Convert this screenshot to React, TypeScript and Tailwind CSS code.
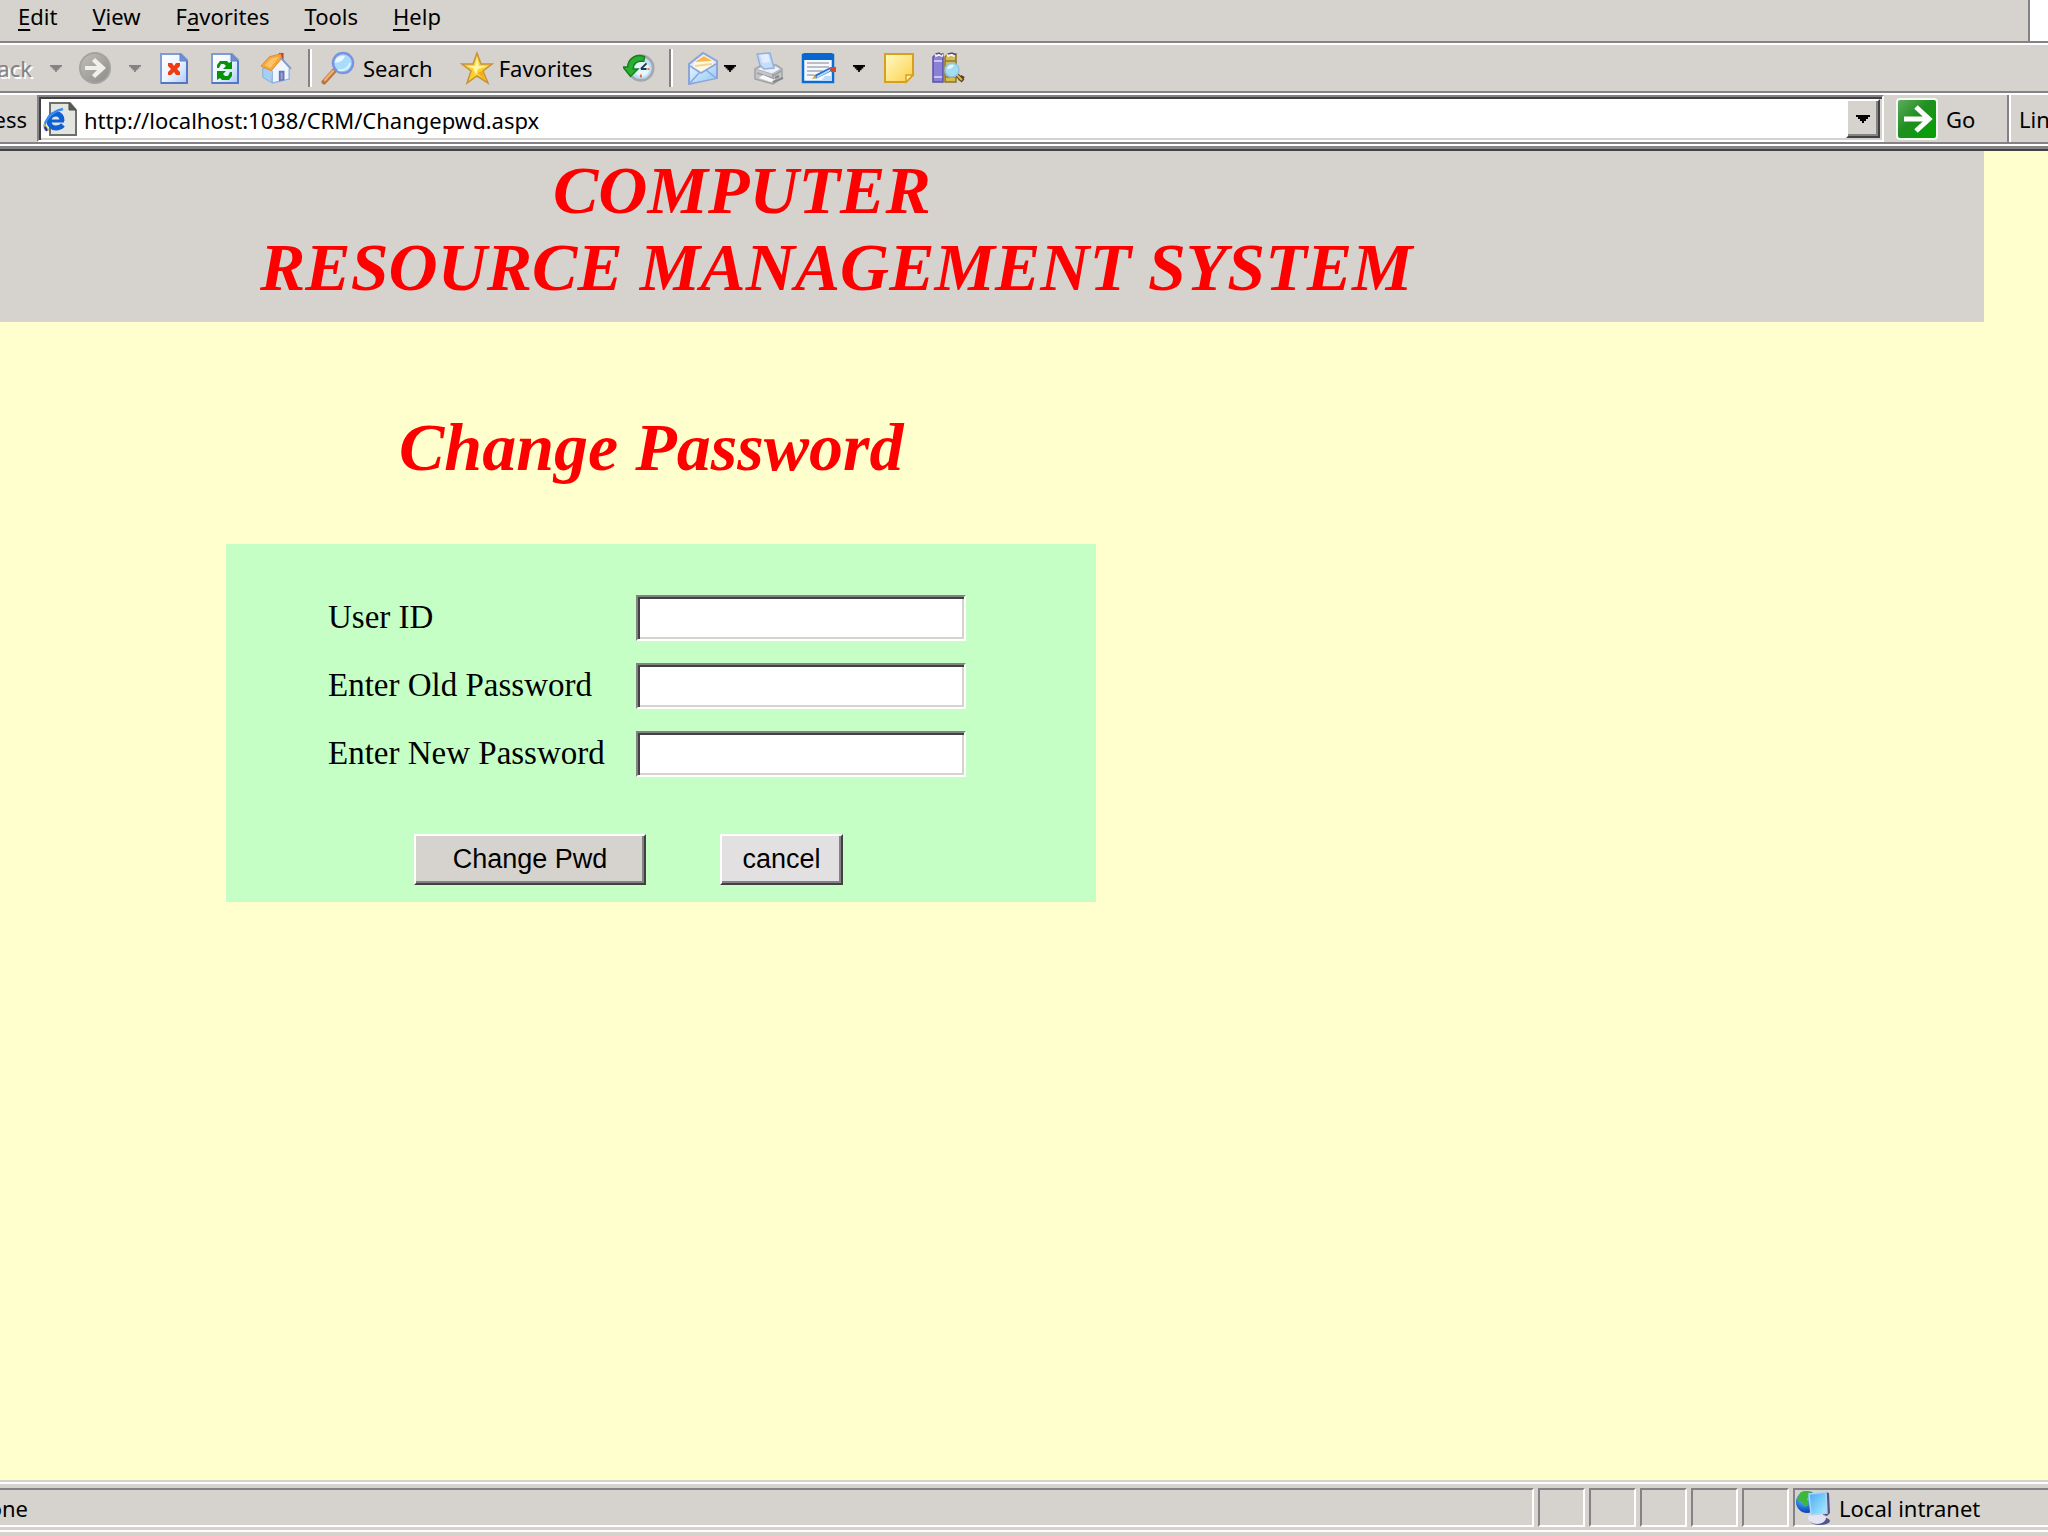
import type { ReactNode } from "react";

const raised =
  "border-2 border-t-white border-l-white border-r-[#424142] border-b-[#424142] shadow-[inset_-2px_-2px_0_#848284]";
const sunken =
  "border-2 border-t-[#848284] border-l-[#848284] border-r-white border-b-white shadow-[inset_2px_2px_0_#424142,inset_-2px_-2px_0_#d6d3ce]";

function Caret({ className }: { className: string }) {
  return (
    <svg viewBox="0 0 14 8" className={className} fill="currentColor" aria-hidden="true">
      <path d="M0 0h14v2h-2v2h-2v2H8v2H6V6H4V4H2V2H0z" />
    </svg>
  );
}

function Tool({ label, children }: { label: string; children: ReactNode }) {
  return (
    <button type="button" aria-label={label} className="flex size-8 shrink-0 items-center justify-center">
      {children}
    </button>
  );
}

function Divider() {
  return <div className="h-[38px] w-1 shrink-0 border-l-2 border-r-2 border-l-[#848284] border-r-white" />;
}

function ForwardIcon() {
  return (
    <svg viewBox="0 0 32 32" className="size-8">
      <defs>
        <linearGradient id="fwd" x1="0" y1="0" x2="1" y2="1">
          <stop offset="0" stopColor="#c0bfba" />
          <stop offset="1" stopColor="#8c8b87" />
        </linearGradient>
      </defs>
      <circle cx="16" cy="16" r="15" fill="url(#fwd)" stroke="#a3a29e" strokeWidth="2" />
      <path d="M6 14h12l-5-5 3-3 11 10-11 10-3-3 5-5H6z" fill="#f0efeb" />
    </svg>
  );
}

function PageSheet({ children }: { children: ReactNode }) {
  return (
    <svg viewBox="0 0 32 32" className="size-8">
      <defs>
        <linearGradient id="sheet" x1="0" y1="0" x2="1" y2="1">
          <stop offset="0" stopColor="#ffffff" />
          <stop offset=".5" stopColor="#eef5ff" />
          <stop offset="1" stopColor="#a9cbf7" />
        </linearGradient>
      </defs>
      <path d="M3 2h20l6 6v23H3z" fill="url(#sheet)" stroke="#7f9bd6" strokeWidth="2" />
      <path d="M3 31h26V9" fill="none" stroke="#5477c4" strokeWidth="2" />
      <path d="M22 2v7h7z" fill="#7391d2" stroke="#5f7fc8" strokeWidth="1" />
      {children}
    </svg>
  );
}

function StopIcon() {
  return (
    <PageSheet>
      <path d="M10 11h4l2 3 2-3h4v3l-3 3 3 3v3h-4l-2-3-3 3h-3v-3l3-3-3-3z" fill="#f03c14" />
    </PageSheet>
  );
}

function RefreshIcon() {
  return (
    <PageSheet>
      <path d="M8 16v-3l3-4h7l2 2 3-2v8h-9l3-3-2-2h-3l-2 4z" fill="#069406" />
      <path d="M8 19h9l-3 3 2 2h3l2-4h2v4l-3 4h-7l-2-2-3 2z" fill="#069406" />
    </PageSheet>
  );
}

function HomeIcon() {
  return (
    <svg viewBox="0 0 34 34" className="h-[34px] w-[34px]">
      <path d="M20 1h5v10h-5z" fill="#c34020" />
      <path d="M3 17v10l10 6V18z" fill="#a5cff4" stroke="#83acdd" strokeWidth="1" />
      <path d="M12 20L22 7l9 11v12l-18 3z" fill="#eff6fd" />
      <path d="M13 33V20M13 33l18-4V18" fill="none" stroke="#8fb4e2" strokeWidth="1.5" />
      <path d="M1 15L10 5l12-3 1 5-11 13z" fill="#f8a63c" stroke="#e08a2c" strokeWidth="1" />
      <path d="M5 14l7-7 8-2-9 12z" fill="#ffc46a" />
      <path d="M22 6l11 12" stroke="#7f9ace" strokeWidth="2" />
      <path d="M20 20h6v10l-6 1z" fill="#6c74b8" />
      <path d="M22 22h2v7h-2z" fill="#9ea4d8" />
    </svg>
  );
}

function SearchIcon() {
  return (
    <svg viewBox="0 0 34 34" className="h-[34px] w-[34px]">
      <path d="M3 31l10-11" stroke="#b9754a" strokeWidth="5" strokeLinecap="round" />
      <path d="M4 29l8-9" stroke="#f2b068" strokeWidth="2.5" strokeLinecap="round" />
      <circle cx="22" cy="12" r="10" fill="#a9dbfb" stroke="#7d92e0" strokeWidth="2.5" />
      <path d="M14 12c0-6 6-8 10-7-2 5-5 6-10 7z" fill="#ecf8ff" />
      <path d="M17 19c6 1 11-2 12-7" fill="none" stroke="#d6f4ff" strokeWidth="2" />
    </svg>
  );
}

function StarIcon() {
  return (
    <svg viewBox="0 0 34 34" className="h-[34px] w-[34px]">
      <path d="M17 2l4 11h11l-9 7 5 12-11-7-10 7 4-12-9-7h11z" fill="#fbd12c" stroke="#c9913a" strokeWidth="1.5" />
      <path d="M17 6l2 9h8l-9 3-2 6-3-7-7-2h9z" fill="#fff6a8" />
      <path d="M18 22l7 7-3-9z" fill="#f4aa10" />
    </svg>
  );
}

function HistoryIcon() {
  return (
    <svg viewBox="0 0 34 34" className="h-[34px] w-[34px]">
      <circle cx="19" cy="17" r="13" fill="#bfe0f4" stroke="#a4a8b0" strokeWidth="3" />
      <circle cx="20" cy="18" r="8" fill="#e4f6fd" />
      <path d="M19 18l6-6M19 18h6" stroke="#26364e" strokeWidth="2" />
      <path d="M19 24v3M26 18h2" stroke="#e0703c" strokeWidth="2" />
      <path d="M23 5C13 1 5 8 5 16H0l8 10 8-8h-5c0-6 4-9 11-8z" fill="#2cae30" stroke="#147d1c" strokeWidth="1.5" />
    </svg>
  );
}

function MailIcon() {
  return (
    <svg viewBox="0 0 32 34" className="h-[34px] w-8">
      <defs>
        <linearGradient id="mail" x1="0" y1="0" x2="1" y2="1">
          <stop offset="0" stopColor="#eaf7ff" />
          <stop offset="1" stopColor="#8fc8f4" />
        </linearGradient>
      </defs>
      <path d="M2 13L16 2l14 8v17L2 33z" fill="#d7e8fa" stroke="#8ea2dc" strokeWidth="2" />
      <path d="M7 11l10-7 9 6v7l-12 4-8-4z" fill="#fff7e2" />
      <path d="M8 11l9-6 8 5z" fill="#f7b84c" />
      <path d="M8 15l17-2" stroke="#f3d79a" strokeWidth="2" />
      <path d="M3 15l11 7 15-9v14L3 32z" fill="url(#mail)" />
      <path d="M3 15l11 7 15-9M3 32l9-10M29 27l-10-8" fill="none" stroke="#86a6e2" strokeWidth="1.5" />
    </svg>
  );
}

function PrinterIcon() {
  return (
    <svg viewBox="0 0 32 34" className="h-[34px] w-8">
      <path d="M2 18l7-4h14l6 4v9l-9 6-18-5z" fill="#c4c5c7" stroke="#a0a2a6" strokeWidth="1.5" />
      <path d="M3 18l7-3h13l5 3-9 5z" fill="#f0f1f2" stroke="#b0b3b8" strokeWidth="1" />
      <path d="M4 3l13-1 4 15-10 1-4-4z" fill="#c5dcfa" stroke="#8fb0e4" strokeWidth="1.5" />
      <path d="M7 4l8-1 2 8-7 1z" fill="#e2eefe" />
      <path d="M4 22l15 5M20 23v8M20 25l8-5" stroke="#9a9da2" strokeWidth="1.5" />
      <path d="M6 27l12 4 4-2-12-5z" fill="#fafafa" />
      <path d="M22 27l4-2M20 31l10-4" stroke="#85878a" strokeWidth="2" />
    </svg>
  );
}

function EditIcon() {
  return (
    <svg viewBox="0 0 36 32" className="h-8 w-9 shrink-0">
      <path d="M2 3h30v27H2z" fill="#f4f8ff" stroke="#0c6cd2" strokeWidth="2.5" />
      <path d="M1 3l2-2h28l2 2v5H1z" fill="#0868cf" />
      <path d="M6 11h22M6 15h22M6 19h16M6 23h7" stroke="#a7abb4" strokeWidth="1.5" />
      <path d="M24 24h7v5H20z" fill="#bcdcfb" />
      <path d="M14 25l16-8" stroke="#2c6fd0" strokeWidth="4" />
      <path d="M16 25l13-7" stroke="#b8e2ff" strokeWidth="1.5" />
      <path d="M11 27l3-4 2 3z" fill="#c9a23c" />
      <path d="M29 15h6v5h-5z" fill="#dc4426" />
    </svg>
  );
}

function NoteIcon() {
  return (
    <svg viewBox="0 0 32 32" className="size-8">
      <defs>
        <linearGradient id="note" x1="0" y1="0" x2="1" y2="1">
          <stop offset="0" stopColor="#fffbc4" />
          <stop offset="1" stopColor="#fcd04c" />
        </linearGradient>
      </defs>
      <path d="M2 2h28v21l-7 7H2z" fill="url(#note)" stroke="#d8a01e" strokeWidth="2" />
      <path d="M30 23h-7v7z" fill="#fff3b0" stroke="#d8a01e" strokeWidth="1.5" />
    </svg>
  );
}

function ResearchIcon() {
  return (
    <svg viewBox="0 0 34 32" className="h-8 w-[34px] shrink-0">
      <path d="M1 5l3-3h7v28H1z" fill="#8a80d8" stroke="#5a52a8" strokeWidth="1.5" />
      <path d="M2 9h8M2 25h8" stroke="#c9c4f4" strokeWidth="2" />
      <path d="M13 5l3-3h8v28H13z" fill="#d8bd4a" stroke="#8c7428" strokeWidth="1.5" />
      <path d="M13 9h11M13 25h11" stroke="#8c7a3c" strokeWidth="1.5" />
      <path d="M3 4l4-2 4 2M15 4l4-2 4 2" stroke="#f4f2fa" strokeWidth="3" fill="none" />
      <path d="M4 2l3-1 3 2M16 2l4-1 4 2" stroke="#565266" strokeWidth="1.5" fill="none" />
      <path d="M24 22l7 7M31 24l-3 5" stroke="#57431a" strokeWidth="4" />
      <path d="M25 23l5 5" stroke="#e0bb3c" strokeWidth="2" />
      <circle cx="20" cy="18" r="7" fill="#a4dcf4" stroke="#8fc4dc" strokeWidth="1.5" />
      <path d="M15 17c1-4 4-5 7-4-1 3-4 4-7 4z" fill="#e4f8ff" />
    </svg>
  );
}

function PageIcon() {
  return (
    <svg viewBox="0 0 34 34" className="h-[34px] w-[34px] shrink-0">
      <path d="M7 1h20l6 7v25H7z" fill="#e3e6e0" stroke="#6e706c" strokeWidth="2" />
      <path d="M26 1v7h7z" fill="#5a5c58" stroke="#4a4c48" strokeWidth="1" />
      <path
        d="M19 19c0-5-2-7-6-7s-7 3-7 7 3 7 7 7c3 0 5-1 7-3"
        fill="none"
        stroke="#0f60d6"
        strokeWidth="5"
      />
      <path d="M8 19h13" stroke="#0f60d6" strokeWidth="3" />
      <path d="M3 28C-1 22 6 10 20 7" fill="none" stroke="#3a8cf0" strokeWidth="2.5" />
      <path d="M1 22l3 4M3 26l3 2" stroke="#c8b83c" strokeWidth="2" />
      <path d="M2 25l2 4" stroke="#3c2c78" strokeWidth="2" />
    </svg>
  );
}

function GoIcon() {
  return (
    <svg viewBox="0 0 42 42" className="size-[42px]">
      <defs>
        <linearGradient id="go" x1="0" y1="0" x2="1" y2="1">
          <stop offset="0" stopColor="#63ad63" />
          <stop offset=".45" stopColor="#1f8f1f" />
          <stop offset="1" stopColor="#00a400" />
        </linearGradient>
      </defs>
      <rect x="1" y="1" width="40" height="40" rx="3" fill="url(#go)" stroke="#f4fbf2" strokeWidth="2" />
      <path d="M8 21h24M20 9l13 12-13 12" fill="none" stroke="#ffffff" strokeWidth="5" />
    </svg>
  );
}

function IntranetIcon() {
  return (
    <svg viewBox="0 0 36 36" className="size-9 shrink-0">
      <defs>
        <radialGradient id="globe" cx=".4" cy=".3" r=".8">
          <stop offset="0" stopColor="#8fd8ff" />
          <stop offset=".6" stopColor="#1c6cd8" />
          <stop offset="1" stopColor="#0c2c9c" />
        </radialGradient>
        <linearGradient id="screen" x1="0" y1="0" x2="1" y2="1">
          <stop offset="0" stopColor="#4aa8f4" />
          <stop offset="1" stopColor="#a8f0ff" />
        </linearGradient>
      </defs>
      <circle cx="12" cy="12" r="11" fill="url(#globe)" />
      <path d="M5 3c4-3 9-2 11 0l-4 6 2 5-4 3-3-5-5-2z" fill="#3cb83c" />
      <ellipse cx="25" cy="31" rx="10" ry="4" fill="#54548c" />
      <ellipse cx="22" cy="28" rx="9" ry="6" fill="#e2e4f4" />
      <path d="M31 2l3 1 1 20-3 3-4-1z" fill="#54548c" />
      <path d="M14 4l17-2 1 21-16 2z" fill="url(#screen)" stroke="#b4d4f0" strokeWidth="1.5" />
    </svg>
  );
}

const menus: [string, string, string][] = [
  ["", "E", "dit"],
  ["", "V", "iew"],
  ["F", "a", "vorites"],
  ["", "T", "ools"],
  ["", "H", "elp"],
];

function MenuBar() {
  return (
    <div className="flex h-[43px] items-stretch">
      <nav className="flex flex-1 items-start gap-[35px] border-b-2 border-b-[#848284] pl-[18px]">
        {menus.map(([before, key, after]) => (
          <button key={key + after} type="button" className="leading-[32px]">
            {before}
            <span className="underline decoration-2 underline-offset-4">{key}</span>
            {after}
          </button>
        ))}
      </nav>
      <div className="w-5 border-b-2 border-l-2 border-b-[#848284] border-l-[#848284] bg-white" />
    </div>
  );
}

function ToolBar() {
  return (
    <div className="flex h-[50px] items-center border-b-2 border-t-2 border-b-[#848284] border-t-white">
      <button type="button" disabled className="flex w-8 justify-end text-[#848284] [text-shadow:2px_2px_0_#ffffff]">
        ack
      </button>
      <button type="button" aria-label="Back list" disabled className="ml-[18px] text-[#848284]">
        <Caret className="h-[7px] w-3" />
      </button>
      <div className="ml-[17px] flex items-center gap-[18px]">
        <Tool label="Forward"><ForwardIcon /></Tool>
        <button type="button" aria-label="Forward list" disabled className="text-[#848284]">
          <Caret className="h-[7px] w-3" />
        </button>
      </div>
      <div className="ml-[17px] flex items-center gap-[19px]">
        <Tool label="Stop"><StopIcon /></Tool>
        <Tool label="Refresh"><RefreshIcon /></Tool>
        <Tool label="Home"><HomeIcon /></Tool>
      </div>
      <div className="ml-4 flex items-center">
        <Divider />
        <button type="button" className="ml-[9px] flex items-center gap-2">
          <SearchIcon />
          Search
        </button>
        <button type="button" className="ml-[27px] flex items-center gap-[5px]">
          <StarIcon />
          Favorites
        </button>
        <div className="ml-[30px] flex items-center gap-[14px]">
          <Tool label="History"><HistoryIcon /></Tool>
          <Divider />
          <Tool label="Mail"><MailIcon /></Tool>
        </div>
        <button type="button" aria-label="Mail list" className="ml-[5px]">
          <Caret className="h-[7px] w-3" />
        </button>
        <div className="ml-[17px] flex items-center gap-[18px]">
          <Tool label="Print"><PrinterIcon /></Tool>
          <Tool label="Edit"><EditIcon /></Tool>
          <button type="button" aria-label="Edit list">
            <Caret className="h-[7px] w-3" />
          </button>
          <Tool label="Discuss"><NoteIcon /></Tool>
          <Tool label="Research"><ResearchIcon /></Tool>
        </div>
      </div>
    </div>
  );
}

function AddressBar() {
  return (
    <div className="flex h-[51px] items-stretch border-b-2 border-t-2 border-b-[#848284] border-t-white">
      <label htmlFor="address" className="flex w-[27px] items-center justify-end">
        ess
      </label>
      <div className={`ml-[10px] flex flex-1 items-center bg-white p-[2px] pl-1 ${sunken}`}>
        <PageIcon />
        <input
          id="address"
          type="text"
          defaultValue="http://localhost:1038/CRM/Changepwd.aspx"
          className="ml-[7px] min-w-0 flex-1 bg-transparent pt-[2px] outline-none"
        />
        <button
          type="button"
          aria-label="Show addresses"
          className={`flex h-full w-[34px] items-center justify-center bg-[#d6d3ce] ${raised}`}
        >
          <Caret className="h-2 w-[14px]" />
        </button>
      </div>
      <div className="flex w-[125px] items-center border-r-2 border-r-[#848284] pl-3">
        <button type="button" className="flex items-center gap-2">
          <GoIcon />
          Go
        </button>
      </div>
      <div className="flex w-[39px] items-center border-l-2 border-l-white pl-2">Lin</div>
    </div>
  );
}

const fields = [
  { id: "user", label: "User ID", type: "text" },
  { id: "old", label: "Enter Old Password", type: "password" },
  { id: "new", label: "Enter New Password", type: "password" },
];

function Page() {
  return (
    <main className="flex-1 bg-[#ffffce]">
      <header className="mr-[64px] h-[171px] bg-[#d6d3ce] pt-px font-['Liberation_Serif',serif] text-[68px] font-bold italic leading-[77px] text-[#ff0000]">
        <h1>
          <span className="block pl-[553px]">COMPUTER</span>
          <span className="block pl-[260px]">RESOURCE MANAGEMENT SYSTEM</span>
        </h1>
      </header>
      <h2 className="mt-[87px] pl-[399px] font-['Liberation_Serif',serif] text-[68px] font-bold italic leading-[77px] text-[#ff0000]">
        Change Password
      </h2>
      <form
        className="ml-[226px] mt-[58px] w-[870px] bg-[#c6ffc6] pb-[17px] pl-[102px] pt-[51px]"
        onSubmit={(event) => event.preventDefault()}
      >
        <div className="flex flex-col gap-[22px]">
          {fields.map((field) => (
            <div key={field.id} className="flex items-start">
              <label
                htmlFor={field.id}
                className="w-[308px] font-['Liberation_Serif',serif] text-[33px] leading-[44px]"
              >
                {field.label}
              </label>
              <input id={field.id} type={field.type} className={`h-[46px] w-[330px] bg-white px-2 ${sunken}`} />
            </div>
          ))}
        </div>
        <div className="mt-[57px] flex gap-[74px] pl-[86px] font-['Liberation_Sans',Arial,sans-serif] text-[27px]">
          <button type="submit" className={`h-[51px] w-[232px] bg-[#d6d3ce] pb-[2px] ${raised}`}>
            Change Pwd
          </button>
          <button type="button" className={`h-[51px] w-[123px] bg-[#e2e0e1] pb-[2px] ${raised}`}>
            cancel
          </button>
        </div>
      </form>
    </main>
  );
}

const pane = "border-2 border-t-[#848284] border-l-[#848284] border-r-white border-b-white";

function StatusBar() {
  return (
    <footer className="h-14 bg-[#d6d3ce] pt-[2px]">
      <div className="flex h-[50px] gap-1 border-b-2 border-t-2 border-b-white border-t-white pb-[3px] pt-1">
        <div className={`flex flex-1 items-center border-l-0 ${pane}`}>
          <span className="flex w-[28px] justify-end">one</span>
        </div>
        {[0, 1, 2, 3, 4].map((n) => (
          <div key={n} className={`w-[47px] ${pane}`} />
        ))}
        <div className={`flex w-[255px] items-center gap-2 border-r-0 ${pane}`}>
          <IntranetIcon />
          Local intranet
        </div>
      </div>
    </footer>
  );
}

export default function App() {
  return (
    <div className="flex min-h-screen flex-col overflow-hidden bg-[#d6d3ce] font-['Noto_Sans',sans-serif] text-[22px] leading-[30px] text-black">
      <MenuBar />
      <ToolBar />
      <AddressBar />
      <div className="h-[7px] border-b-2 border-t-2 border-b-[#424142] border-t-white bg-[#848284]" />
      <Page />
      <StatusBar />
    </div>
  );
}
